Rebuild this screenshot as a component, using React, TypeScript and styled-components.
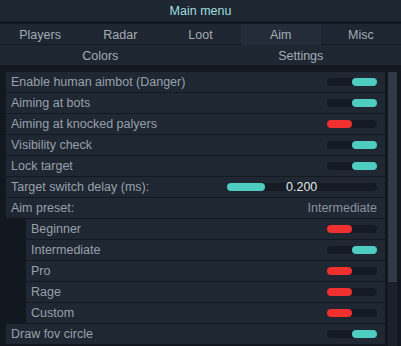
import React from "react";
import styled, { createGlobalStyle } from "styled-components";

const GlobalStyle = createGlobalStyle`
  html, body { margin: 0; padding: 0; background: #121820; }
  body { font-family: "Liberation Sans", Arial, sans-serif; }
`;

const Window = styled.div`
  width: 401px;
  height: 346px;
  background: #121820;
  display: flex;
  flex-direction: column;
  overflow: hidden;
`;

const Title = styled.div`
  height: 21px;
  line-height: 22px;
  background: #1e2632;
  color: #9fdede;
  text-align: center;
  font-size: 12.5px;
  margin-bottom: 3px;
`;

const TabRow = styled.div<{ $cols: number }>`
  display: grid;
  grid-template-columns: repeat(${({ $cols }) => $cols}, 1fr);
  height: 20px;
  background: #1e2631;
  border-bottom: 1px solid #141a22;
`;

const Tab = styled.div<{ $active?: boolean }>`
  text-align: center;
  line-height: 22px;
  font-size: 12.5px;
  color: #a4acb4;
  background: ${({ $active }) => ($active ? "#232c38" : "transparent")};
`;

const Body = styled.div`
  display: flex;
  margin-top: 6px;
  padding-left: 6px;
  gap: 3px;
`;

const List = styled.div`
  width: 379px;
  display: flex;
  flex-direction: column;
`;

const Row = styled.div<{ $indent?: boolean }>`
  height: 20px;
  border-bottom: 1px solid #131920;
  margin-left: ${({ $indent }) => ($indent ? "20px" : "0")};
  background: #1f2733;
  display: flex;
  align-items: center;
  padding: 0 8px 0 5px;
  font-size: 12.5px;
  color: #98a1aa;
`;

const Label = styled.span`
  flex: 1;
  white-space: nowrap;
`;

const Track = styled.div`
  position: relative;
  width: 50px;
  height: 8px;
  border-radius: 4px;
  background: #151b24;
`;

const Knob = styled.div<{ $on: boolean }>`
  position: absolute;
  top: 0;
  left: ${({ $on }) => ($on ? "25px" : "0")};
  width: 25px;
  height: 8px;
  border-radius: 4px;
  background: ${({ $on }) => ($on ? "#4ecdc0" : "#f0302e")};
`;

const SliderTrack = styled.div`
  position: relative;
  width: 150px;
  height: 8px;
  border-radius: 4px;
  background: #151b24;
`;

const SliderFill = styled.div`
  position: absolute;
  left: 0;
  top: 0;
  height: 8px;
  border-radius: 4px;
  background: #4ecdc0;
`;

const SliderValue = styled.span`
  position: absolute;
  left: 59px;
  top: -5px;
  font-size: 12.5px;
  line-height: 18px;
  color: #e2e6ea;
`;

const Value = styled.span`
  color: #8a939e;
`;

const Scrollbar = styled.div`
  width: 9px;
  height: 276px;
  background: #1a212b;
  display: flex;
  flex-direction: column;
`;

const Thumb = styled.div`
  height: 210px;
  background: #303945;
`;

const Toggle = ({ on }: { on: boolean }) => (
  <Track>
    <Knob $on={on} />
  </Track>
);

type Item = { label: string; on?: boolean };

const top: Item[] = [
  { label: "Enable human aimbot (Danger)", on: true },
  { label: "Aiming at bots", on: true },
  { label: "Aiming at knocked palyers", on: false },
  { label: "Visibility check", on: true },
  { label: "Lock target", on: true },
];

const presets: Item[] = [
  { label: "Beginner", on: false },
  { label: "Intermediate", on: true },
  { label: "Pro", on: false },
  { label: "Rage", on: false },
  { label: "Custom", on: false },
];

export default function App() {
  const delay = 0.2;
  const maxDelay = 0.8;
  return (
    <Window>
      <GlobalStyle />
      <Title>Main menu</Title>
      <TabRow $cols={5}>
        <Tab>Players</Tab>
        <Tab>Radar</Tab>
        <Tab>Loot</Tab>
        <Tab $active>Aim</Tab>
        <Tab>Misc</Tab>
      </TabRow>
      <TabRow $cols={2}>
        <Tab>Colors</Tab>
        <Tab>Settings</Tab>
      </TabRow>
      <Body>
        <List>
          {top.map((it) => (
            <Row key={it.label}>
              <Label>{it.label}</Label>
              <Toggle on={!!it.on} />
            </Row>
          ))}
          <Row>
            <Label>Target switch delay (ms):</Label>
            <SliderTrack>
              <SliderFill style={{ width: `${(delay / maxDelay) * 150}px` }} />
              <SliderValue>{delay.toFixed(3)}</SliderValue>
            </SliderTrack>
          </Row>
          <Row>
            <Label>Aim preset:</Label>
            <Value>Intermediate</Value>
          </Row>
          {presets.map((it) => (
            <Row key={it.label} $indent>
              <Label>{it.label}</Label>
              <Toggle on={!!it.on} />
            </Row>
          ))}
          <Row>
            <Label>Draw fov circle</Label>
            <Toggle on />
          </Row>
        </List>
        <Scrollbar>
          <Thumb />
        </Scrollbar>
      </Body>
    </Window>
  );
}
